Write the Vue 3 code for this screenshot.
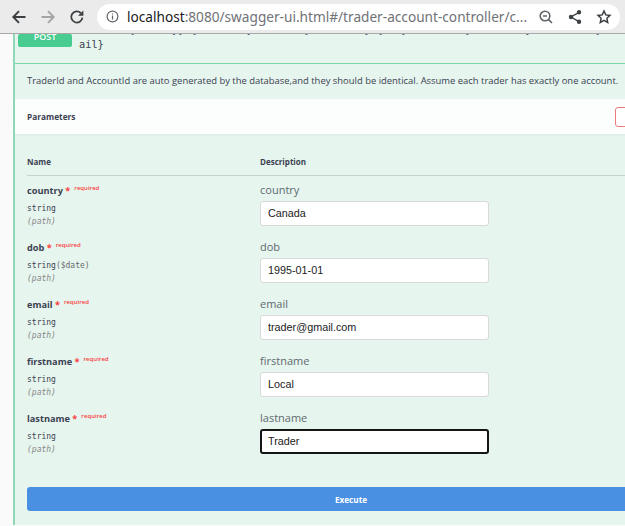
<script setup>
const rows = [
  { name: 'country', type: 'string', value: 'Canada' },
  { name: 'dob', type: 'string', fmt: '($date)', value: '1995-01-01' },
  { name: 'email', type: 'string', value: 'trader@gmail.com' },
  { name: 'firstname', type: 'string', value: 'Local' },
  { name: 'lastname', type: 'string', value: 'Trader', focus: true },
]
</script>

<template>
  <div class="page">
    <header class="chrome">
      <svg class="nav" width="16" height="16" viewBox="0 0 16 16" fill="none" stroke="#3c4043" stroke-width="1.9"><path d="M14.5 8H2.5M8 2.2 2.3 8 8 13.8"/></svg>
      <svg class="nav" width="16" height="16" viewBox="0 0 16 16" fill="none" stroke="#a2a4a6" stroke-width="1.9"><path d="M1.5 8h12M8 2.2 13.7 8 8 13.8"/></svg>
      <svg class="nav rel" width="16" height="16" viewBox="0 0 16 16" fill="none" stroke="#3c4043" stroke-width="1.8"><path d="M13.4 8.6A5.6 5.6 0 1 1 11.8 4"/><path d="M14.4 1.4v5.4H9" fill="#3c4043" stroke="none"/></svg>
      <div class="omni">
        <svg class="info" width="13" height="13" viewBox="0 0 13 13" fill="none" stroke="#5f6368" stroke-width="1.2"><circle cx="6.5" cy="6.5" r="5.4"/><path d="M6.5 5.6v3.8M6.5 3.4v1.2"/></svg>
        <span class="url"><b>localhost</b>:8080/swagger-ui.html#/trader-account-controller/c...</span>
        <svg class="tool" width="16" height="16" viewBox="0 0 16 16" fill="none" stroke="#5f6368" stroke-width="1.6"><circle cx="7" cy="7" r="4.8"/><path d="M10.4 10.4 14 14M5 7h4"/></svg>
        <svg class="tool" width="16" height="16" viewBox="0 0 16 16" fill="#3c4043" stroke="#3c4043" stroke-width="1.4"><path d="M12 3.3 4 8l8 4.7" fill="none"/><circle cx="12" cy="3.3" r="1.5"/><circle cx="4" cy="8" r="1.5"/><circle cx="12" cy="12.7" r="1.5"/></svg>
        <svg class="tool" width="16" height="16" viewBox="0 0 16 16" fill="none" stroke="#3c4043" stroke-width="1.5"><path d="m8 2 1.8 3.9 4.2.5-3.1 2.9.8 4.2L8 11.4l-3.7 2.1.8-4.2L2 6.4l4.2-.5z"/></svg>
      </div>
    </header>

    <main class="content">
      <section class="op">
        <div class="summary">
          <span class="method">POST</span>
          <span class="path">/trader/{country}/{lastname}/create/{firstname}/{dob}/details/{firstname}/add/info/{em<br>ail}</span>
        </div>
        <p class="desc">TraderId and AccountId are auto generated by the database,and they should be identical. Assume each trader has exactly one account.</p>
        <div class="params-head">
          <h4>Parameters</h4>
          <span class="try"></span>
        </div>
        <div class="table-head">
          <span class="col-name">Name</span>
          <span>Description</span>
        </div>
        <div v-for="r in rows" :key="r.name" class="row">
          <div class="col-name">
            <div class="pname">{{ r.name }}<span class="star"> *</span><sup class="req">required</sup></div>
            <div class="ptype">{{ r.type }}<span v-if="r.fmt" class="fmt">{{ r.fmt }}</span></div>
            <div class="pin">(path)</div>
          </div>
          <div class="col-desc">
            <div class="plabel">{{ r.name }}</div>
            <input class="field" :class="{ focus: r.focus }" :value="r.value" />
          </div>
        </div>
        <button class="execute">Execute</button>
      </section>
    </main>
  </div>
</template>

<style>
html, body { margin: 0; overflow: hidden; }
</style>

<style scoped>
.page { width: 625px; height: 526px; overflow: hidden; background: #fafafa; display: flex; flex-direction: column; }
.chrome { height: 34px; flex: none; box-sizing: border-box; background: #ebebeb; border-bottom: 1px solid #a8a8a8; display: flex; align-items: center; padding-left: 11px; }
.nav { flex: none; margin-right: 13px; }
.rel { margin-right: 12px; }
.omni { width: 523px; height: 26px; flex: none; border-radius: 13px; background: #fff; display: flex; align-items: center; padding-left: 9px; box-sizing: border-box; }
.info { flex: none; margin-right: 8px; }
.url { font: 13.65px "Noto Sans", sans-serif; color: #6f7276; white-space: nowrap; width: 402px; overflow: hidden; flex: none; margin-right: 9px; }
.url b { font-weight: 400; color: #202124; }
.tool { flex: none; margin-right: 13px; }
.content { flex: 1; overflow: hidden; padding-left: 13px; font-family: "Open Sans", "Noto Sans", sans-serif; }
.op { box-sizing: border-box; width: 640px; height: 491px; background: #e6f5ee; border-left: 2px solid #8fd9b6; }
.summary { height: 30px; box-sizing: border-box; border-bottom: 1px solid #80d6ab; overflow: hidden; display: flex; align-items: flex-start; padding-left: 3px; }
.method { flex: none; width: 54px; height: 13px; background: #49cc90; color: #fff; font: 600 9px/6px "Open Sans", sans-serif; text-align: center; border-radius: 2px; }
.path { font: 400 10.3px/14.5px "DejaVu Sans Mono", monospace; color: #3b4151; margin: -12px 0 0 7px; white-space: nowrap; }
.desc { margin: 0; height: 35px; box-sizing: border-box; padding: 0 0 0 12px; font-size: 9.44px; line-height: 33px; color: #3b4151; white-space: nowrap; }
.params-head { height: 35px; background: rgba(255, 255, 255, .85); display: flex; align-items: center; padding-left: 12px; box-shadow: 0 1px 2px rgba(0, 0, 0, .05); position: relative; }
.params-head h4 { margin: 0; font-size: 8.3px; font-weight: 700; color: #3b4151; }
.try { position: absolute; left: 600px; top: 8px; width: 40px; height: 20px; box-sizing: border-box; border: 1px solid #ef7a7a; border-radius: 3px; background: #fff; }
.table-head { display: flex; margin: 0 0 0 12px; height: 42px; box-sizing: border-box; padding-top: 22px; border-bottom: 1px solid #c5d4cd; font-size: 8px; font-weight: 700; color: #3b4151; }
.col-name { width: 233px; flex: none; }
.row { display: flex; height: 57px; margin-left: 12px; }
.pname { font-size: 9.2px; font-weight: 700; color: #3b4151; line-height: 14px; margin-top: 8px; white-space: nowrap; }
.star { color: #f93e3e; }
.req { font-size: 6px; font-weight: 600; color: #f93e3e; margin-left: 4px; vertical-align: 4px; line-height: 0; }
.ptype { font: 400 8px/12px "DejaVu Sans Mono", monospace; color: #3b4151; margin-top: 5px; }
.fmt { color: #6b6b6b; }
.pin { font: italic 400 8px/12px "DejaVu Sans Mono", monospace; color: #888; margin-top: 1px; }
.plabel { font-size: 11px; line-height: 14px; color: #5f6a6e; margin-top: 7px; }
.field { display: block; width: 229px; height: 25px; margin-top: 4px; box-sizing: border-box; border: 1px solid #d9d9d9; border-radius: 3px; background: #fff; padding: 0 7px 2px; font: 10.8px "Liberation Sans", sans-serif; color: #222; outline: none; }
.field.focus { border: 2px solid #151515; padding: 0 6px 2px; }
.execute { display: block; margin: 26px 0 0 12px; width: 648px; height: 24px; border: none; border-radius: 3px; background: #4a90e2; color: #fff; font: 700 8.2px "Open Sans", sans-serif; padding: 0; text-align: center; }
</style>
